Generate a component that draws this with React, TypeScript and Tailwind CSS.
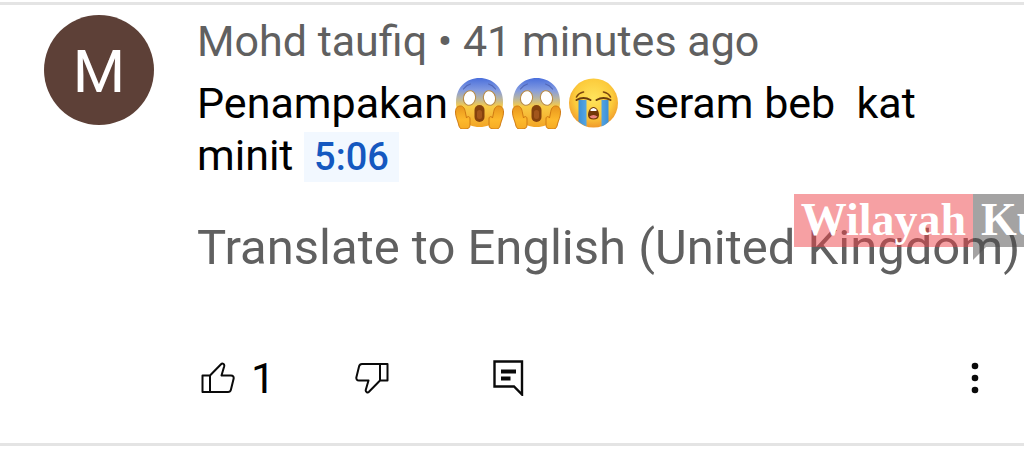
import React from "react";

function ScreamEmoji({ id }: { id: string }) {
  return (
    <svg role="img" aria-label="Face screaming in fear" viewBox="0 0 50 52" className="ml-1.5 inline-block h-[52px] w-[51px] align-top">
      <defs>
        <linearGradient id={`${id}-face`} x1="0" y1="0" x2="0" y2="1">
          <stop offset="0" stopColor="#4a6fdc" />
          <stop offset="0.25" stopColor="#839be0" />
          <stop offset="0.42" stopColor="#b9b5a0" />
          <stop offset="0.58" stopColor="#f8cb45" />
          <stop offset="1" stopColor="#f3a526" />
        </linearGradient>
        <linearGradient id={`${id}-hand`} x1="0" y1="0" x2="0" y2="1">
          <stop offset="0" stopColor="#e8951c" />
          <stop offset="0.6" stopColor="#fdb92c" />
          <stop offset="1" stopColor="#f6ab25" />
        </linearGradient>
      </defs>
      <path d="M25 1C12 1 1.500 10 1.500 25S11 50 25 50s23.500-10 23.500-25S38 1 25 1z" fill={`url(#${id}-face)`} />
      <path d="M9 12q3-4 7-5M34 7q4 1 7 5" fill="none" stroke="#5268b8" strokeWidth="1.2" strokeLinecap="round" />
      <ellipse cx="15" cy="21" rx="6" ry="7.4" fill="#fff" stroke="#b98a42" strokeWidth="1" transform="rotate(14 15 21)" />
      <ellipse cx="35" cy="21" rx="6" ry="7.4" fill="#fff" stroke="#b98a42" strokeWidth="1" transform="rotate(-14 35 21)" />
      <rect x="20" y="28" width="10" height="17" rx="5" fill="#85420d" />
      <rect x="22.500" y="33" width="5" height="9" rx="2.500" fill="#a2561c" />
      <path d="M1 35c0-4 2-6 5-6s4.500 3 5 7l1 5c1-2 3.500-2 3.500 1v6c0 3-2 4-5 4H8c-2.500 0-3.500-2-4-5-1-4-3-7-3-12z" fill={`url(#${id}-hand)`} stroke="#d07a12" strokeWidth="1" />
      <path d="M49 35c0-4-2-6-5-6s-4.500 3-5 7l-1 5c-1-2-3.500-2-3.500 1v6c0 3 2 4 5 4H42c2.500 0 3.500-2 4-5 1-4 3-7 3-12z" fill={`url(#${id}-hand)`} stroke="#d07a12" strokeWidth="1" />
    </svg>
  );
}

function CryEmoji() {
  return (
    <svg role="img" aria-label="Loudly crying face" viewBox="0 0 50 52" className="ml-1.5 inline-block h-[52px] w-[51px] align-top">
      <defs>
        <radialGradient id="cry-face" cx="0.5" cy="0.4" r="0.6">
          <stop offset="0" stopColor="#ffe45c" />
          <stop offset="0.65" stopColor="#fccb3c" />
          <stop offset="1" stopColor="#f0992b" />
        </radialGradient>
        <linearGradient id="cry-tear" x1="0" y1="0" x2="1" y2="0">
          <stop offset="0" stopColor="#3c8fd6" />
          <stop offset="0.5" stopColor="#6bbcf0" />
          <stop offset="1" stopColor="#3c8fd6" />
        </linearGradient>
      </defs>
      <circle cx="25" cy="26" r="24.5" fill="url(#cry-face)" />
      <path d="M10 23h8v26.500q-5-2-8-5zM33 23h7v22q-3 3-7 4.500z" fill="url(#cry-tear)" />
      <path d="M8 23q7-4 14 0M28 23q7-4 14 0" fill="none" stroke="#6b3d0e" strokeWidth="2" strokeLinecap="round" />
      <path d="M8 20q2-4 7-5M35 15q5 1 7 5" fill="none" stroke="#7a4610" strokeWidth="1.6" strokeLinecap="round" />
      <path d="M25 30c3 0 5.500 4 5.500 8 0 3-2 4.500-5.500 4.500s-5.500-1.500-5.500-4.500c0-4 2.500-8 5.500-8z" fill="#713708" />
      <path d="M21 39.500q4-3 8 0-1 2-4 2t-4-2z" fill="#e9827c" />
      <path d="M22 32.500q3-3 6 0v1.500h-6z" fill="#fff" />
    </svg>
  );
}

function ThumbUp() {
  return (
    <svg aria-hidden="true" viewBox="0 0 34 32" className="h-8 w-[34px]" fill="none" stroke="#0a0a0a" strokeWidth="2" strokeLinejoin="round">
      <path d="M1.500 13.500H9V30H1.500zM9 13.500L20 2.200c1.500-1.400 3.700 0 3.200 2L20.500 13.500h9.500c2 0 3 1.400 2.600 3.200l-2.700 11c-.4 1.600-1.300 2.300-2.900 2.300H9" />
    </svg>
  );
}

function Comment() {
  return (
    <article className="relative overflow-hidden border-y-[3px] border-[#e4e4e4] bg-white">
      <div className="flex pt-2.5 pl-11">
        <div className="flex size-[110px] shrink-0 items-center justify-center rounded-full bg-[#5d4037] pt-1 text-6xl text-white">
          M
        </div>
        <div className="ml-[43px] min-w-0 flex-1">
          <header className="text-[43px] leading-[52px] whitespace-nowrap text-[#606060]">
            Mohd taufiq • 41 minutes ago
          </header>
          <p className="mt-2.5 text-[43px] leading-[52px] whitespace-nowrap text-black">
            Penampakan
            <ScreamEmoji id="scream-a" />
            <ScreamEmoji id="scream-b" />
            <CryEmoji />
            <span className="ml-1 whitespace-pre"> seram beb  kat</span>
            <br />
            minit{" "}
            <a href="#t=306" className="inline-block bg-[#f2f8ff] px-2.5 text-[38px] leading-[50px] font-medium text-[#1558c0]">
              5:06
            </a>
          </p>
          <button type="button" className="mt-10 block text-[49px] leading-[52px] whitespace-nowrap text-[#606060]">
            Translate to English (United Kingdom)
          </button>
        </div>
      </div>
      <div className="mt-20 mb-[41px] flex h-12 items-center pr-10 pl-[201px] text-black">
        <button type="button" aria-label="Like, 1" className="flex w-[154px] items-center gap-4 text-[43px] leading-[48px]">
          <ThumbUp />
          <span>1</span>
        </button>
        <button type="button" aria-label="Dislike" className="w-[137px]">
          <span className="block w-[34px] rotate-180">
            <ThumbUp />
          </span>
        </button>
        <button type="button" aria-label="Reply">
          <svg aria-hidden="true" viewBox="0 0 32 36" className="h-9 w-8" fill="none" stroke="#0a0a0a" strokeWidth="2.400">
            <path d="M2.500 1.500H30v33l-8-8H2.500z" />
            <path d="M9 11.500h15M9 18.500h9.500" strokeWidth="3.800" />
          </svg>
        </button>
        <button type="button" aria-label="More options" className="ml-auto">
          <svg aria-hidden="true" viewBox="0 0 18 32" className="h-8 w-[18px]" fill="#0a0a0a">
            <circle cx="9" cy="4" r="3.300" />
            <circle cx="9" cy="16" r="3.300" />
            <circle cx="9" cy="28" r="3.300" />
          </svg>
        </button>
      </div>
      <div className="absolute top-[189px] left-[794px] flex h-[53px] font-['Liberation_Serif',serif] text-[46px] leading-[52px] font-bold text-white">
        <span className="w-[179px] bg-[#ee4248]/50 text-center">Wilayah</span>
        <span className="relative w-[140px] bg-[#4a4748]/50 pl-2">
          Ku
          <svg aria-hidden="true" viewBox="0 0 13 13" className="absolute top-full left-0 size-[13px]">
            <path d="M0 0h13L0 13z" fill="#4a4748" fillOpacity="0.5" />
          </svg>
        </span>
      </div>
    </article>
  );
}

export default function App() {
  return (
    <main className="bg-white pt-0.5 font-[Roboto,sans-serif]">
      <Comment />
    </main>
  );
}
